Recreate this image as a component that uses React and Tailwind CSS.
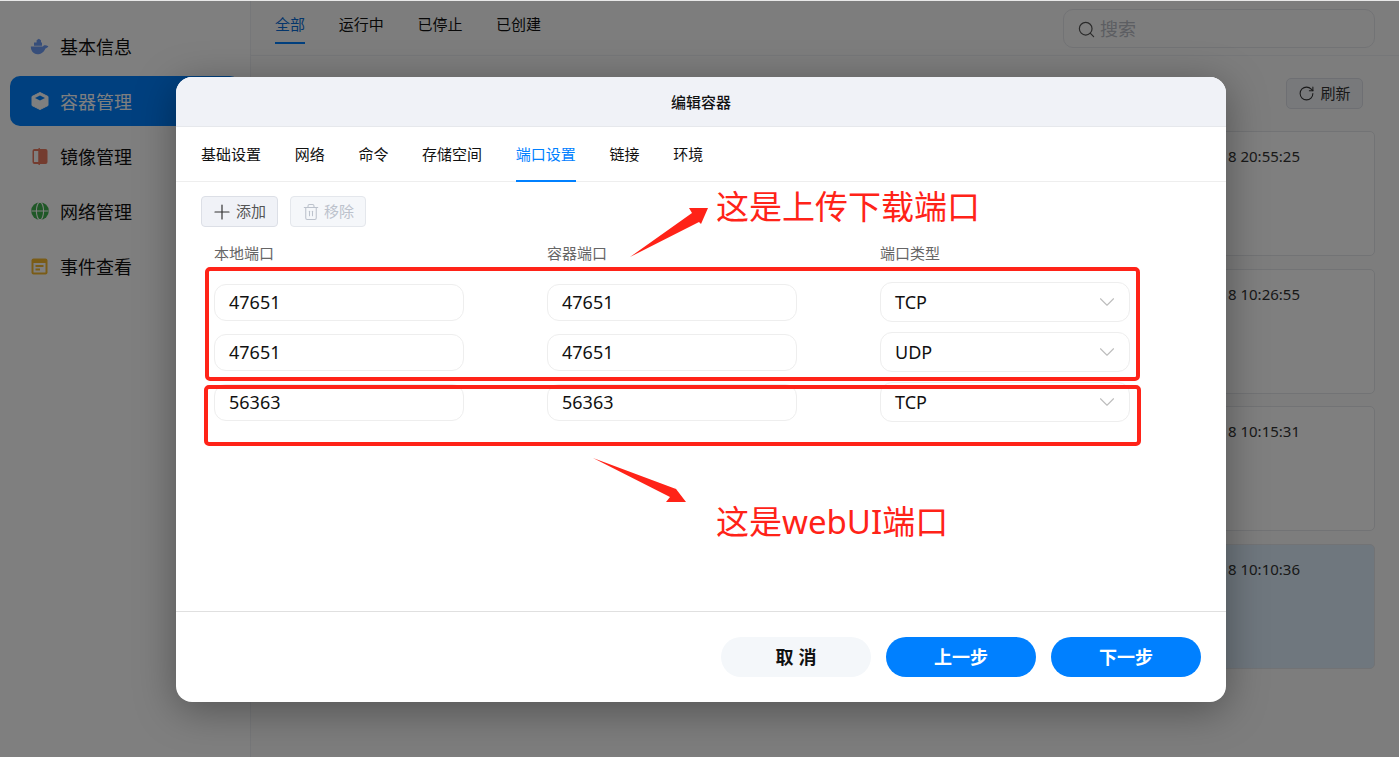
import React from "react";
import { Plus, Trash2, ChevronDown, Search, RotateCw } from "lucide-react";

const Whale = () => (
  <svg width="19" height="17" viewBox="0 0 19 17" fill="#6e9cf5">
    <path d="M0.8 8.6H13C13.6 7.2 15.4 6.8 18.4 8.2 17.4 9.8 16.2 10.2 15.4 10.4 14 14.2 10.8 16.2 7.4 16.2 3.4 16.2 0.8 13 0.8 8.6Z" />
    <path d="M4 7.8V4.6H6.6V2.2L8.8 0.8 11 2.2V4.6H12V7.8Z" />
  </svg>
);
const Cube = () => (
  <svg width="18" height="18" viewBox="0 0 18 18"><path d="M9 0.5 17 4.5V13.5L9 17.5 1 13.5V4.5Z" fill="#fff" stroke="#fff" strokeLinejoin="round"/><path d="M9 3.5 14 6 9 8.6 4 6Z" fill="#0080ff"/></svg>
);
const Mirror = () => (
  <svg width="16" height="17" viewBox="0 0 16 17"><rect x="0.5" y="1" width="15" height="15" rx="2" fill="#e9785f"/><rect x="2" y="3" width="4.5" height="11" fill="#fff"/><rect x="6.5" y="0" width="1.4" height="17" fill="#e9785f"/></svg>
);
const Globe = () => (
  <svg width="18" height="18" viewBox="0 0 18 18"><circle cx="9" cy="9" r="8.8" fill="#3fb04f"/><ellipse cx="9" cy="9" rx="3.6" ry="8.8" fill="none" stroke="#fff" strokeWidth="1.1"/><path d="M0.5 9H17.5" stroke="#fff" strokeWidth="1"/></svg>
);
const Cal = () => (
  <svg width="17" height="17" viewBox="0 0 17 17"><rect x="0.5" y="0.5" width="16" height="16" rx="2" fill="#f5b92e"/><rect x="2.5" y="5" width="12" height="9.5" fill="#fff"/><rect x="4.5" y="7" width="8" height="2" fill="#f5b92e"/><rect x="4.5" y="10.5" width="4.5" height="2" fill="#f5b92e"/></svg>
);

const nav = [
  { t: "基本信息", i: <Whale /> },
  { t: "容器管理", i: <Cube />, active: true },
  { t: "镜像管理", i: <Mirror /> },
  { t: "网络管理", i: <Globe /> },
  { t: "事件查看", i: <Cal /> },
];

const times = ["8 20:55:25", "8 10:26:55", "8 10:15:31", "8 10:10:36"];
const tabs = ["基础设置", "网络", "命令", "存储空间", "端口设置", "链接", "环境"];
const rows = [["47651", "TCP"], ["47651", "UDP"], ["56363", "TCP"]];

export default function App() {
  return (
    <div className="relative w-[1399px] h-[757px] overflow-hidden bg-white flex font-['Noto_Sans','Noto_Sans_CJK_SC',sans-serif] text-[#111]">
      <aside className="w-[251px] shrink-0 border-r border-[#eceef2] pt-[21px] pl-[10px]">
        {nav.map((n) => (
          <div key={n.t} className={`flex items-center h-[50px] mb-[5px] w-[230px] rounded-[10px] pl-[20px] pt-[2px] gap-[11px] text-[18px] ${n.active ? "bg-[#0080ff] text-white" : "text-[#111]"}`}>
            <span className="w-[19px] flex justify-center -mt-[2px]">{n.i}</span>
            <span>{n.t}</span>
          </div>
        ))}
      </aside>

      <main className="flex-1 bg-[#fbfbfb]">
        <header className="h-[56px] border-b border-[#eceef2] flex items-start pl-[24px] pr-[24px] justify-between">
          <nav className="flex gap-[33.7px] text-[15px] h-[44px] items-center">
            <span className="relative text-[#0a6cd6] h-[44px] flex items-center pt-[5px]">全部<i className="absolute left-0 right-0 bottom-0 h-[2px] bg-[#0080ff]" /></span>
            <span className="pt-[5px]">运行中</span><span className="pt-[5px]">已停止</span><span className="pt-[5px]">已创建</span>
          </nav>
          <div className="mt-[9px] w-[312px] h-[39px] border border-[#e4e6ea] rounded-[10px] flex items-center pl-[13px] pt-[1px] gap-[4px] text-[18px] text-[#b9bcc4]">
            <Search size={19} strokeWidth={1.5} color="#555" />搜索
          </div>
        </header>
        <div className="pl-[20px] pr-[24px]">
          <div className="flex justify-end pt-[22px] pr-[12px] h-[75px]">
            <div className="w-[77px] h-[31px] border border-[#dcdfe6] bg-[#f0f2f7] rounded-[5px] flex items-center justify-center gap-[5px] text-[15px] text-[#333]">
              <RotateCw size={17} strokeWidth={1.5} />刷新
            </div>
          </div>
          {times.map((t, i) => (
            <div key={t} className={`h-[125px] mb-[12.6px] rounded-[5px] border border-[#e4e6ea] flex justify-end pr-[74px] pt-[13px] text-[15px] leading-[22px] text-[#333] ${i === 3 ? "bg-[#deeefc]" : "bg-white"}`}>
              <span>{t}</span>
            </div>
          ))}
        </div>
      </main>

      <div className="absolute inset-x-0 bottom-0 top-px bg-black/50" />
      <div className="absolute inset-x-0 top-0 h-px bg-[#e8e8e8]" />

      <section className="absolute left-[176px] top-[77px] w-[1050px] h-[625px] rounded-[16px] bg-white overflow-hidden flex flex-col shadow-[0_8px_40px_rgba(0,0,0,0.35)]">
        <div className="h-[50px] shrink-0 bg-[#f0f2f7] border-b border-[#e6e8ec] flex items-center justify-center pt-[1px] text-[15px] font-medium text-[#111]">编辑容器</div>
        <div className="h-[55px] shrink-0 border-b border-[#eeeeee] flex gap-[33.7px] pl-[25px] text-[15px] text-[#111]">
          {tabs.map((t) => (
            <div key={t} className={`relative flex items-center pt-[1px] ${t === "端口设置" ? "text-[#0080ff]" : ""}`}>
              {t}
              {t === "端口设置" && <i className="absolute left-0 right-0 -bottom-px h-[2px] bg-[#0080ff]" />}
            </div>
          ))}
        </div>
        <div className="flex-1 pt-[14px] pl-[25px]">
          <div className="flex gap-[12px] text-[15px]">
            <div className="w-[77px] h-[31px] rounded-[4px] border border-[#dcdfe6] bg-[#f0f2f7] flex items-center justify-center gap-[2px] pr-[3px] text-[#555]">
              <Plus size={24} strokeWidth={1.2} color="#333" />添加
            </div>
            <div className="w-[76px] h-[31px] rounded-[4px] border border-[#e4e7ec] bg-[#f5f7fa] flex items-center justify-center gap-[4px] text-[#bcc2cc]">
              <Trash2 size={18} strokeWidth={1.4} />移除
            </div>
          </div>
          <div className="pl-[13px]">
            <div className="grid grid-cols-[250px_250px_250px] gap-x-[83px] mt-[16px] h-[34px] text-[15px] leading-[20px] text-[#666]">
              <span>本地端口</span><span>容器端口</span><span>端口类型</span>
            </div>
            {rows.map(([p, k], i) => (
              <div key={i} className="grid grid-cols-[250px_250px_250px] gap-x-[83px] h-[50px] items-center text-[18px] text-[#111]">
                <div className="h-[37px] rounded-[12px] border border-[#eeeeee] flex items-center pl-[14px]">{p}</div>
                <div className="h-[37px] rounded-[12px] border border-[#eeeeee] flex items-center pl-[14px]">{p}</div>
                <div className="h-[40px] rounded-[12px] border border-[#eeeeee] flex items-center justify-between pl-[14px] pr-[9px]">
                  {k}<ChevronDown size={26} strokeWidth={1} color="#bdbdbd" />
                </div>
              </div>
            ))}
          </div>
        </div>
        <div className="h-[91px] shrink-0 border-t border-[#e0e0e0] flex items-start justify-end gap-[15px] pt-[25px] pr-[25px] text-[18px] font-bold">
          <div className="w-[150px] h-[40px] rounded-[20px] bg-[#f4f7fa] text-[#111] flex items-center justify-center gap-[5px]"><span>取</span><span>消</span></div>
          <div className="w-[150px] h-[40px] rounded-[20px] bg-[#0080ff] text-white flex items-center justify-center">上一步</div>
          <div className="w-[150px] h-[40px] rounded-[20px] bg-[#0080ff] text-white flex items-center justify-center">下一步</div>
        </div>
      </section>

      <div className="absolute left-[205px] top-[267px] w-[935px] h-[114px] border-[4px] border-[#ff2318] rounded-[5px]" />
      <div className="absolute left-[204px] top-[385px] w-[937px] h-[61px] border-[4px] border-[#ff2318] rounded-[5px]" />
      <span className="absolute left-[716px] top-[184px] text-[33px] leading-[46px] text-[#ff2318] whitespace-nowrap">这是上传下载端口</span>
      <span className="absolute left-[716px] top-[499px] text-[33px] leading-[46px] text-[#ff2318] whitespace-nowrap">这是webUI端口</span>
      <svg className="absolute left-0 top-0 pointer-events-none" width="1399" height="757">
        <polygon points="630,257 692,213 689,208 708,208 701,224 699,222" fill="#ff2318" />
        <polygon points="593,458 676,489 673,485 686,502 666,502 670,497" fill="#ff2318" />
      </svg>
    </div>
  );
}
